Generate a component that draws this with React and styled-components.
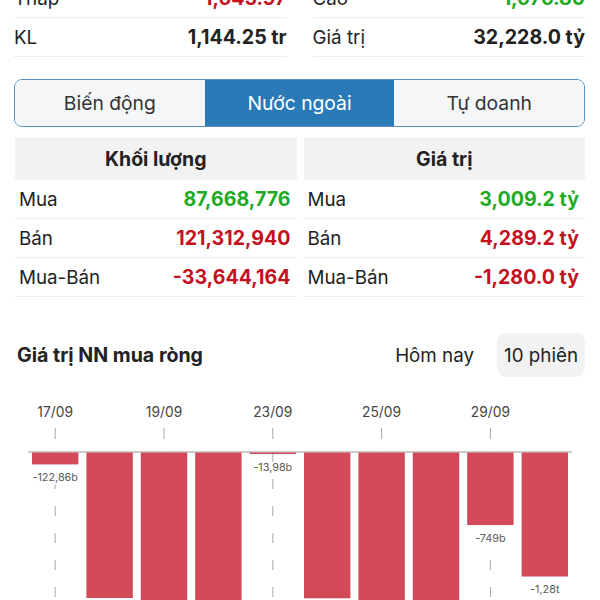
import styled, { createGlobalStyle } from "styled-components"

const GlobalStyle = createGlobalStyle`
    html, body {
        margin: 0;
        padding: 0;
        background: #fff;
        overflow: hidden;
        font-family: Inter, "Noto Sans", "Liberation Sans", sans-serif;
        color: #222;
    }
`

const Page = styled.main`
    width: 600px;
    box-sizing: border-box;
    padding: 0 15px 0 14px;
    margin-top: -21px;
`

const StatsGrid = styled.section`
    display: grid;
    grid-template-columns: 1fr 1fr;
    column-gap: 26px;
`

const StatRow = styled.div`
    display: flex;
    justify-content: space-between;
    align-items: center;
    height: 38px;
    border-bottom: 1px solid #ededed;
`

const Label = styled.span`
    font-size: 18.8px;
    color: #222;
`

const Value = styled.span`
    font-size: 19.6px;
    font-weight: 700;
    color: ${(p) => p.$color || "#222"};
`

const Tabs = styled.nav`
    display: grid;
    grid-template-columns: repeat(3, 1fr);
    margin-top: 22px;
    height: 48px;
    border: 1.5px solid #5a93c4;
    border-radius: 8px;
    overflow: hidden;
    box-sizing: border-box;
`

const Tab = styled.button`
    border: none;
    font-family: inherit;
    font-size: 19.3px;
    background: ${(p) => (p.$active ? "#2b7ab8" : "#f4f6f8")};
    color: ${(p) => (p.$active ? "#fff" : "#333")};
`

const Tables = styled.section`
    display: grid;
    grid-template-columns: 1fr 1fr;
    column-gap: 7px;
    margin-top: 11px;
    padding-left: 1px;
`

const TableHead = styled.div`
    height: 42px;
    background: #f2f2f2;
    display: flex;
    align-items: center;
    justify-content: center;
    font-size: 19.5px;
    font-weight: 700;
    color: #222;
`

const TableRow = styled(StatRow)`
    height: 38px;
    padding: 0 6px 0 4px;
`

const ChartHead = styled.div`
    display: flex;
    align-items: center;
    justify-content: space-between;
    margin-top: 36px;
    height: 44px;
`

const ChartTitle = styled.h2`
    margin: 0 0 0 3px;
    font-size: 19.6px;
    font-weight: 700;
    color: #222;
`

const Ranges = styled.div`
    display: flex;
    gap: 16px;
`

const RangeButton = styled.button`
    height: 44px;
    padding: 0 7px;
    border: none;
    border-radius: 9px;
    font-family: inherit;
    font-size: 18.8px;
    color: #222;
    background: ${(p) => (p.$active ? "#f2f2f2" : "transparent")};
`

const ChartBox = styled.div`
    margin: 8px -15px 0 -14px;
    height: 240px;
`

const green = "#1fab25"
const red = "#c5111f"

const bars = [
    { date: "17/09", v: -122.86, label: "-122,86b" },
    { v: -1502, label: "-1,50t" },
    { date: "19/09", v: -1720, label: "-1,72t" },
    { v: -1650, label: "-1,65t" },
    { date: "23/09", v: -13.98, label: "-13,98b" },
    { v: -1505, label: "-1,51t" },
    { date: "25/09", v: -2010, label: "-2,01t" },
    { v: -1880, label: "-1,88t" },
    { date: "29/09", v: -749, label: "-749b" },
    { v: -1280, label: "-1,28t" },
]

function NetChart() {
    const top = 385
    const axis = 452 - top
    const left = 28
    const slot = 54.4
    const scale = 124 / 1280
    return (
        <svg width="600" height="240" viewBox="0 0 600 240">
            {bars.map((b, i) => {
                const cx = left + slot * i + slot / 2
                return b.date ? (
                    <g key={"d" + i}>
                        <text x={cx} y={32} textAnchor="middle" fontSize="13.8" fill="#444">{b.date}</text>
                        <line x1={cx} x2={cx} y1={43} y2={54} stroke="#aaa" strokeWidth="1" />
                        <line x1={cx} x2={cx} y1={axis} y2={240} stroke="#aaa" strokeWidth="1" strokeDasharray="10 17" />
                    </g>
                ) : null
            })}
            <line x1={left} x2={572} y1={axis} y2={axis} stroke="#999" strokeWidth="1.2" />
            {bars.map((b, i) => {
                const x = left + slot * i + 4
                const h = Math.max(1.5, -b.v * scale)
                const cx = left + slot * i + slot / 2
                return (
                    <g key={"b" + i}>
                        <rect x={x} y={axis + 0.5} width={slot - 8} height={h} fill="#d24a5a" />
                        <text x={cx} y={axis + h + 17} textAnchor="middle" fontSize="10.8" fill="#5a5a5a"
                            stroke="#fff" strokeWidth="3" paintOrder="stroke">{b.label}</text>
                    </g>
                )
            })}
        </svg>
    )
}

function App() {
    return (
        <>
            <GlobalStyle />
            <Page>
                <StatsGrid>
                    <div>
                        <StatRow><Label>Thấp</Label><Value $color={red}>1,645.97</Value></StatRow>
                        <StatRow><Label>KL</Label><Value>1,144.25 tr</Value></StatRow>
                    </div>
                    <div>
                        <StatRow><Label>Cao</Label><Value $color={green}>1,676.80</Value></StatRow>
                        <StatRow><Label>Giá trị</Label><Value>32,228.0 tỷ</Value></StatRow>
                    </div>
                </StatsGrid>

                <Tabs>
                    <Tab>Biến động</Tab>
                    <Tab $active>Nước ngoài</Tab>
                    <Tab>Tự doanh</Tab>
                </Tabs>

                <Tables>
                    <div>
                        <TableHead>Khối lượng</TableHead>
                        <TableRow><Label>Mua</Label><Value $color={green}>87,668,776</Value></TableRow>
                        <TableRow><Label>Bán</Label><Value $color={red}>121,312,940</Value></TableRow>
                        <TableRow><Label>Mua-Bán</Label><Value $color={red}>-33,644,164</Value></TableRow>
                    </div>
                    <div>
                        <TableHead>Giá trị</TableHead>
                        <TableRow><Label>Mua</Label><Value $color={green}>3,009.2 tỷ</Value></TableRow>
                        <TableRow><Label>Bán</Label><Value $color={red}>4,289.2 tỷ</Value></TableRow>
                        <TableRow><Label>Mua-Bán</Label><Value $color={red}>-1,280.0 tỷ</Value></TableRow>
                    </div>
                </Tables>

                <ChartHead>
                    <ChartTitle>Giá trị NN mua ròng</ChartTitle>
                    <Ranges>
                        <RangeButton>Hôm nay</RangeButton>
                        <RangeButton $active>10 phiên</RangeButton>
                    </Ranges>
                </ChartHead>

                <ChartBox>
                    <NetChart />
                </ChartBox>
            </Page>
        </>
    )
}

export default App
